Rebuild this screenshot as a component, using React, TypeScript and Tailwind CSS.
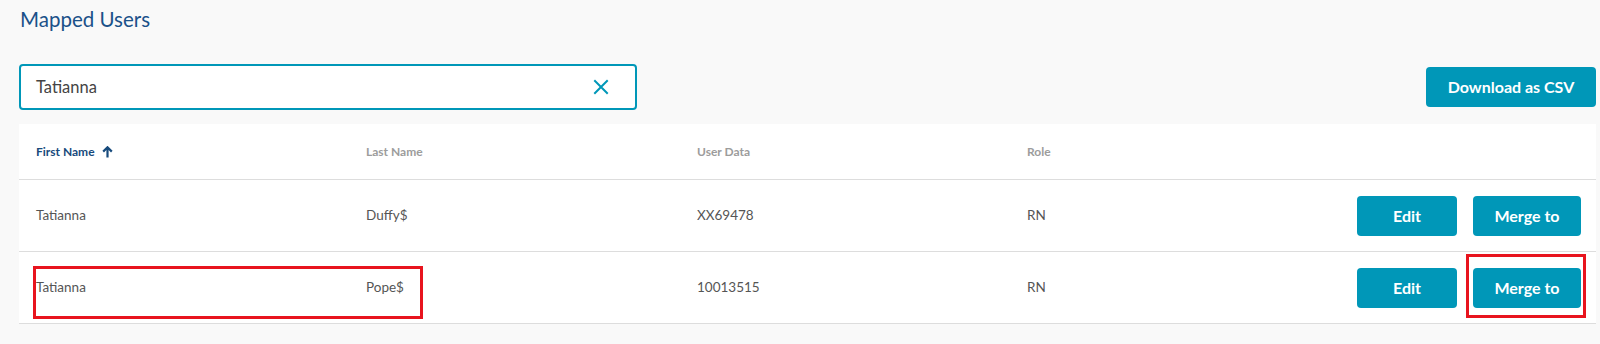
import React from "react";

const font = { fontFamily: "Lato, 'Open Sans', sans-serif" };

function XIcon() {
  return (
    <svg width="16" height="16" viewBox="0 0 16 16" fill="none">
      <path d="M2 2L14 14M14 2L2 14" stroke="#0097b8" strokeWidth="2" strokeLinecap="square" />
    </svg>
  );
}

function ArrowUp() {
  return (
    <svg width="11" height="12" viewBox="0 0 11 12" fill="none">
      <path d="M5.5 11.5V1.5M1.2 5.6L5.5 1.3L9.8 5.6" stroke="#174a7c" strokeWidth="2.2" />
    </svg>
  );
}

const rows = [
  { first: "Tatianna", last: "Duffy$", data: "XX69478", role: "RN" },
  { first: "Tatianna", last: "Pope$", data: "10013515", role: "RN" },
];

export default function App() {
  return (
    <div className="min-h-screen bg-[#f9f9f9] pl-[19px] pr-[4px] pt-[7px]" style={font}>
      <h1 className="text-[20.5px] leading-[24px] text-[#1b5189] pl-[1px]">Mapped Users</h1>

      <div className="mt-[33px] flex items-center justify-between">
        <div className="flex h-[46px] w-[618px] items-center rounded-[4px] border-2 border-[#0097b8] bg-white pl-[15px] pr-[26px]">
          <span className="flex-1 text-[16.5px] text-[#444]">Tatianna</span>
          <XIcon />
        </div>
        <button className="h-[40px] w-[170px] rounded-[4px] bg-[#0097b8] text-[16px] font-bold text-white">
          Download as CSV
        </button>
      </div>

      <div className="relative mt-[14px] bg-white">
        <div className="grid h-[56px] grid-cols-[330px_331px_330px_1fr] items-center border-b border-[#dddddd] pl-[17px] text-[12px] font-bold text-[#9c9c9c]">
          <div className="flex items-center gap-[7px] text-[#174a7c]">
            First Name <ArrowUp />
          </div>
          <div>Last Name</div>
          <div>User Data</div>
          <div>Role</div>
        </div>
        {rows.map((r, i) => (
          <div
            key={i}
            className="grid h-[72px] grid-cols-[330px_331px_330px_1fr_auto] items-center border-b border-[#dddddd] pl-[17px] pr-[15px] text-[13.5px] text-[#555]"
          >
            <div>{r.first}</div>
            <div>{r.last}</div>
            <div>{r.data}</div>
            <div>{r.role}</div>
            <div className="flex gap-[16px]">
              <button className="h-[40px] w-[100px] rounded-[4px] bg-[#0097b8] text-[16px] font-bold text-white">Edit</button>
              <button className="h-[40px] w-[108px] rounded-[4px] bg-[#0097b8] text-[16px] font-bold text-white">Merge to</button>
            </div>
          </div>
        ))}
        <div className="pointer-events-none absolute left-[14px] top-[142px] h-[53px] w-[390px] border-[3px] border-[#e8141e]" />
        <div className="pointer-events-none absolute left-[1447px] top-[130px] h-[64px] w-[120px] border-[3px] border-[#e8141e]" />
      </div>
    </div>
  );
}
